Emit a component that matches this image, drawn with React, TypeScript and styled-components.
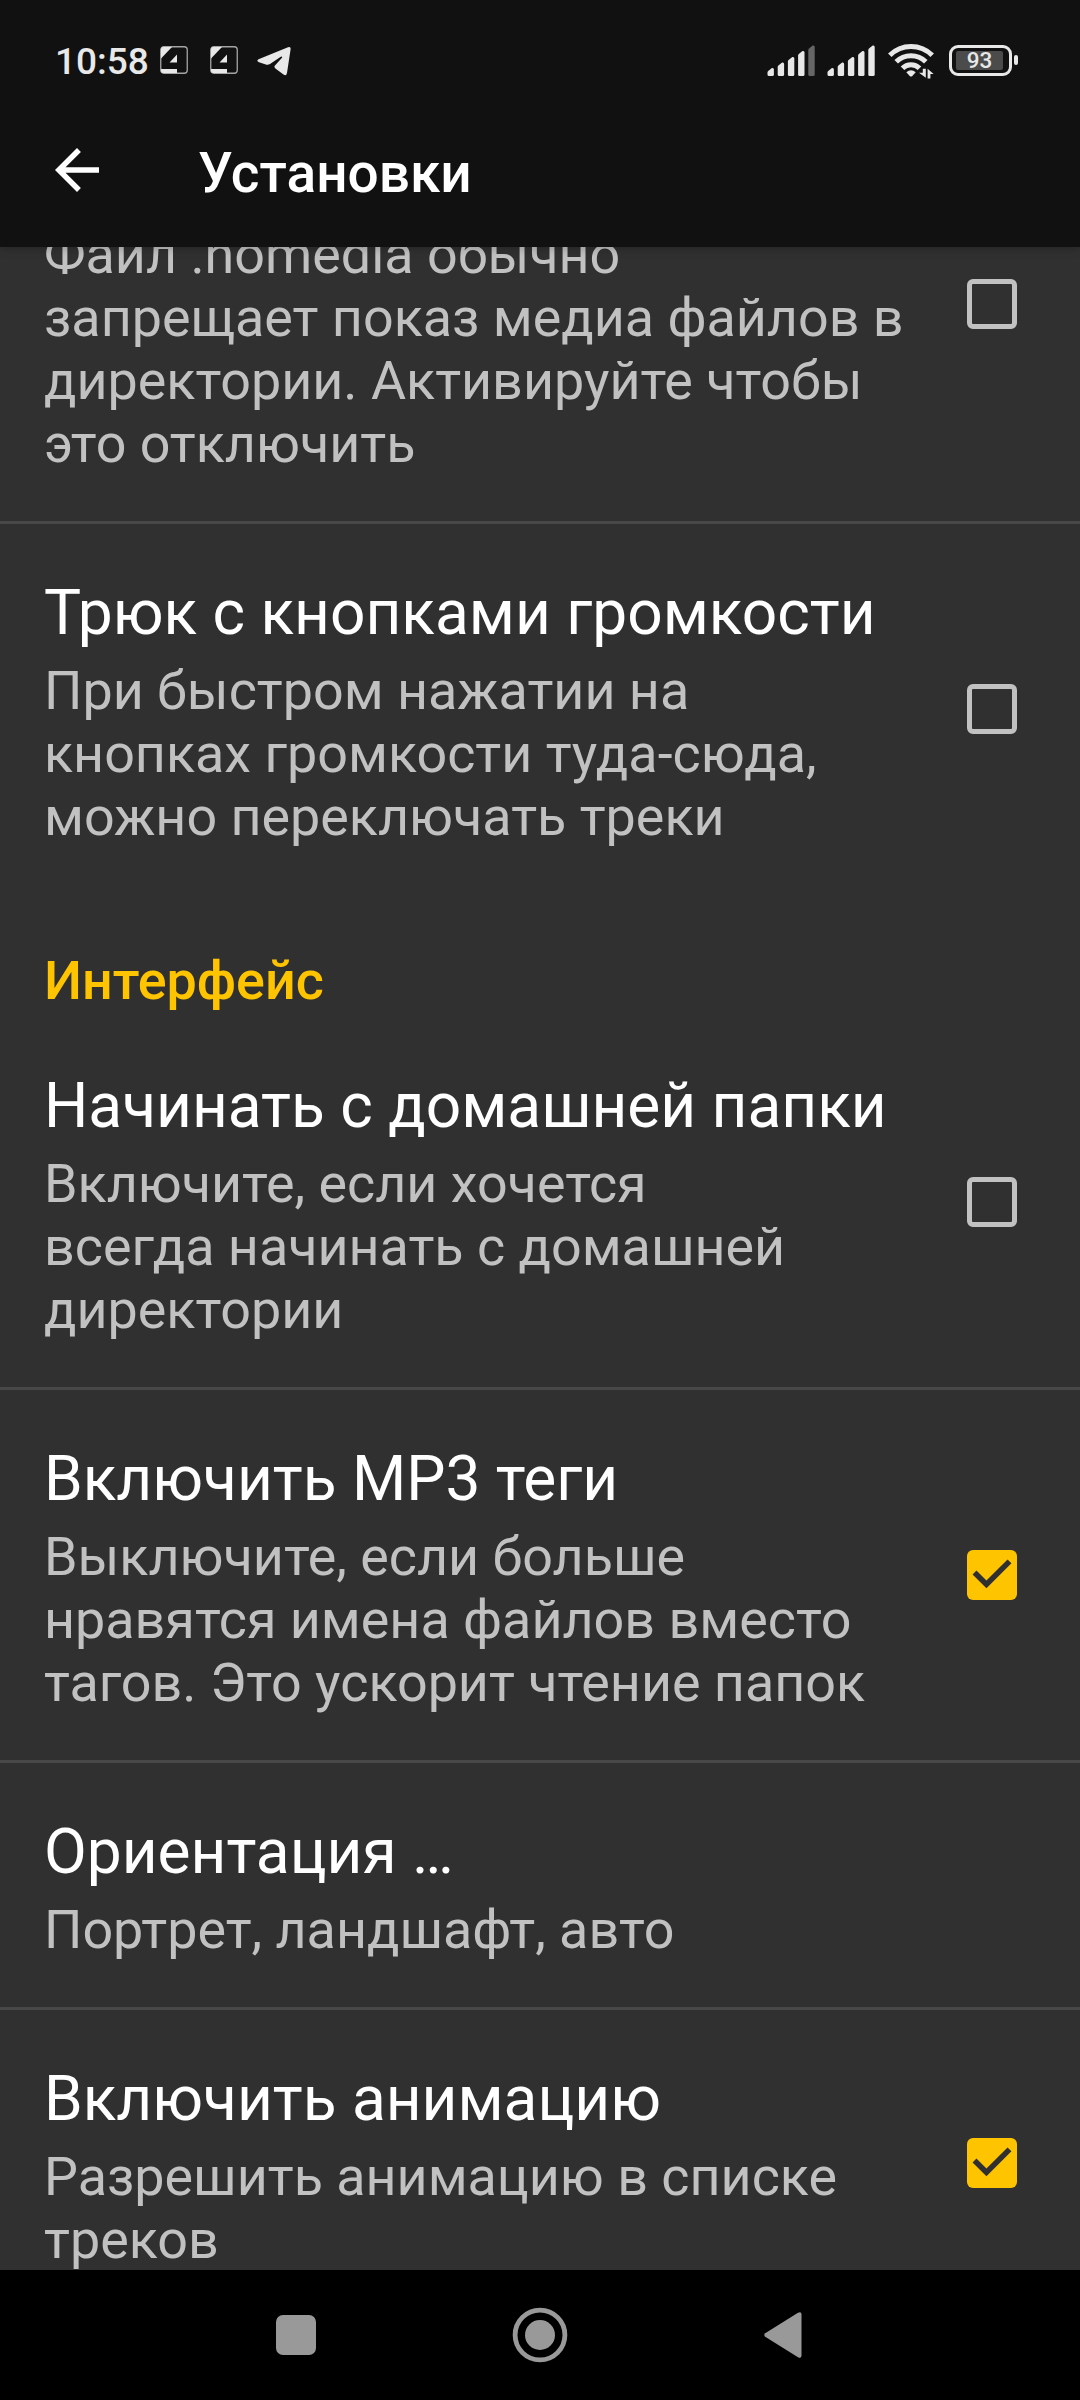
import React from "react";
import styled, { createGlobalStyle, css } from "styled-components";

const GlobalStyle = createGlobalStyle`
  * { box-sizing: border-box; }
  html, body { margin: 0; padding: 0; background: #303030; }
  body { font-family: Roboto, "Noto Sans", sans-serif; }
`;

const Screen = styled.div`
  display: flex;
  flex-direction: column;
  width: 1080px;
  height: 2400px;
  overflow: hidden;
  background: #303030;
`;

const Header = styled.header`
  flex: none;
  height: 247px;
  background: #111111;
  position: relative;
  z-index: 1;
  box-shadow: 0 2px 8px rgba(0, 0, 0, 0.22);
`;

const StatusBar = styled.div`
  display: flex;
  align-items: flex-start;
  justify-content: space-between;
  height: 90px;
  padding: 40px 62px 0 55px;
  color: #e8e8e8;
`;

const StatusGroup = styled.div<{ $drop?: number }>`
  display: flex;
  align-items: flex-start;
  height: 42px;
  padding-top: ${(p) => p.$drop ?? 0}px;
`;

const Clock = styled.span`
  width: 105px;
  font-size: 37px;
  font-weight: 500;
  line-height: 43px;
  white-space: nowrap;
`;

const StatusIcon = styled.svg<{ $gap?: number }>`
  flex: none;
  display: block;
  margin-left: ${(p) => p.$gap ?? 0}px;
`;

const Battery = styled.div`
  display: flex;
  align-items: center;
  height: 40px;
  margin-left: 15px;
`;

const BatteryShell = styled.div`
  width: 63px;
  height: 31px;
  padding: 3px 4px;
  border: 3px solid #e8e8e8;
  border-radius: 9px;
`;

const BatteryCharge = styled.div`
  display: flex;
  align-items: center;
  justify-content: center;
  width: 47px;
  height: 19px;
  border-radius: 2px;
  background: #4b4b4b;
  font-size: 22.5px;
  font-weight: 500;
  line-height: 19px;
`;

const BatteryTip = styled.div`
  width: 4px;
  height: 10px;
  margin-left: 2px;
  border-radius: 2px;
  background: #e8e8e8;
`;

const Toolbar = styled.div`
  display: flex;
  align-items: center;
  height: 160px;
  padding: 0 0 0 44px;
`;

const BackButton = styled.button`
  display: flex;
  width: 66px;
  height: 66px;
  padding: 0;
  border: 0;
  background: none;
  color: #fff;
`;

const ToolbarTitle = styled.h1`
  margin: 7px 0 0 88px;
  color: #fff;
  font-size: 55px;
  font-weight: 500;
  line-height: 65px;
`;

const List = styled.main`
  flex: 1;
  min-height: 0;
  overflow: hidden;
`;

const Row = styled.section<{ $divided?: boolean; $scrolled?: boolean }>`
  display: flex;
  align-items: center;
  padding: 51px 63px 46px 44px;
  ${(p) => p.$divided && css`border-top: 3px solid #484848;`}
  ${(p) =>
    p.$scrolled &&
    css`
      height: 434px;
      margin-top: -160px;
      padding-top: 136px;
    `}
`;

const RowText = styled.div`
  flex: 1;
  display: flex;
  flex-direction: column;
  gap: 9px;
`;

const RowTitle = styled.h2`
  margin: 0;
  color: #fff;
  font-size: 62.2px;
  font-weight: 400;
  line-height: 75px;
  white-space: nowrap;
`;

const Summary = styled.p`
  margin: 0;
  color: #c1c1c1;
  font-size: 53.85px;
  line-height: 63px;
  white-space: pre;
`;

const SectionTitle = styled.h3`
  margin: 0;
  padding: 55px 44px 5px;
  color: #ffc400;
  font-size: 53.9px;
  font-weight: 500;
  line-height: 63px;
`;

const Box = styled.span<{ $checked?: boolean; $raise: number }>`
  flex: none;
  display: flex;
  width: 50px;
  height: 50px;
  margin-left: -60px;
  margin-bottom: ${(p) => p.$raise}px;
  border-radius: 6px;
  ${(p) =>
    p.$checked
      ? css`background: #ffc400;`
      : css`border: 5.5px solid #c1c1c1;`}
`;

const NavBar = styled.nav`
  flex: none;
  display: flex;
  align-items: center;
  justify-content: space-between;
  height: 130px;
  padding: 0 278px 0 276px;
  background: #000;
`;

function Checkbox({ checked, raise = 6 }: { checked?: boolean; raise?: number }) {
  return (
    <Box $checked={checked} $raise={raise} role="checkbox" aria-checked={!!checked}>
      {checked && (
        <svg width="50" height="50" viewBox="3 3.2 18 18">
          <path d="M10 17l-5-5 1.41-1.41L10 14.17l7.59-7.59L19 8l-9 9z" fill="#303030" />
        </svg>
      )}
    </Box>
  );
}

function AppBadge({ gap }: { gap?: number }) {
  return (
    <StatusIcon $gap={gap} width="28" height="28" viewBox="0 0 28 28">
      <rect x="0.75" y="0.75" width="26.5" height="26.5" rx="3" fill="none" stroke="#a5a5a5" strokeWidth="1.3" />
      <path d="M1 3Q1 1 3 1H12L1 12.5Z" fill="currentColor" />
      <path d="M1 23H17V27H3Q1 27 1 25Z" fill="currentColor" />
      <path d="M17 8.5V16.5H9.5Z" fill="currentColor" />
    </StatusIcon>
  );
}

function Signal({ dimLast, gap }: { dimLast?: boolean; gap?: number }) {
  const tops = [22.5, 17, 11.5, 5.5, 0];
  return (
    <StatusIcon $gap={gap} width="48" height="31" viewBox="0 0 48 31">
      {tops.map((t, i) => {
        const x = 0.5 + i * 10.2;
        const w = 6.4;
        return (
          <path
            key={t}
            d={`M${x} ${t + 5}Q${x} ${t + 4} ${x + 1} ${t + 3.2}L${x + w - 2} ${t + 0.5}Q${x + w} ${t} ${x + w} ${t + 2}V29.5Q${x + w} 31 ${x + w - 1.5} 31H${x + 1.5}Q${x} 31 ${x} 29.5Z`}
            fill={dimLast && i === 4 ? "#666" : "currentColor"}
          />
        );
      })}
    </StatusIcon>
  );
}

type Item = { title: string; summary: string; checked?: boolean; divided?: boolean };

function SettingRow({ title, summary, checked, divided }: Item) {
  return (
    <Row $divided={divided}>
      <RowText>
        <RowTitle>{title}</RowTitle>
        <Summary>{summary}</Summary>
      </RowText>
      {checked !== undefined && <Checkbox checked={checked} />}
    </Row>
  );
}

const interfaceItems: Item[] = [
  {
    title: "Начинать с домашней папки",
    summary: "Включите, если хочется\nвсегда начинать с домашней\nдиректории",
    checked: false,
  },
  {
    title: "Включить MP3 теги",
    summary: "Выключите, если больше\nнравятся имена файлов вместо\nтагов. Это ускорит чтение папок",
    checked: true,
    divided: true,
  },
  { title: "Ориентация …", summary: "Портрет, ландшафт, авто", divided: true },
  {
    title: "Включить анимацию",
    summary: "Разрешить анимацию в списке\nтреков",
    checked: true,
    divided: true,
  },
];

export default function App() {
  return (
    <>
      <GlobalStyle />
      <Screen>
        <Header>
          <StatusBar>
            <StatusGroup>
              <Clock>10:58</Clock>
              <StatusGroup $drop={6}>
                <AppBadge />
                <AppBadge gap={22} />
                <StatusIcon $gap={19} width="34" height="30" viewBox="0 0 34 30">
                  <path
                    d="M1.5 13.2L31 1.2Q34 0.2 33.6 3.2L30 27Q29.3 30.5 26.5 28.6L18.4 22.4Q16.5 21 18.2 19.2L25 11.8Q25.8 10 23.8 10.8L13 18Q11 19.2 8.8 18.4L2 16.2Q-1 15 1.5 13.2Z"
                    fill="currentColor"
                  />
                </StatusIcon>
              </StatusGroup>
            </StatusGroup>
            <StatusGroup>
              <StatusGroup $drop={5}>
                <Signal dimLast />
                <Signal gap={12} />
              </StatusGroup>
              <StatusGroup $drop={3}>
                <StatusIcon $gap={13} width="46" height="36" viewBox="0 0 46 36">
                  <g fill="none" stroke="currentColor" strokeWidth="5">
                    <path d="M1.8 12.2A30 30 0 0 1 44.2 12.2" />
                    <path d="M8.2 18.8A21 21 0 0 1 37.8 18.8" />
                    <path d="M14.5 25.2A12 12 0 0 1 31.5 25.2" />
                  </g>
                  <path d="M18.3 29.2Q23 25.4 27.7 29.2L24.3 33Q23 34.2 21.7 33Z" fill="currentColor" />
                  <path d="M34.8 25.8H37.8V34.8L31 29.8H34.8ZM39.6 25.8L45.6 31H42.4V35.4H39.6Z" fill="currentColor" />
                </StatusIcon>
              </StatusGroup>
              <Battery>
                <BatteryShell>
                  <BatteryCharge>93</BatteryCharge>
                </BatteryShell>
                <BatteryTip />
              </Battery>
            </StatusGroup>
          </StatusBar>
          <Toolbar>
            <BackButton aria-label="Назад">
              <svg width="66" height="66" viewBox="0 0 24 24" fill="currentColor">
                <path d="M20 11H7.83l5.59-5.59L12 4l-8 8 8 8 1.41-1.41L7.83 13H20v-2z" />
              </svg>
            </BackButton>
            <ToolbarTitle>Установки</ToolbarTitle>
          </Toolbar>
        </Header>
        <List>
          <Row $scrolled>
            <RowText>
              <Summary>
                {"Файл .nomedia обычно\nзапрещает показ медиа файлов в\nдиректории. Активируйте чтобы\nэто отключить"}
              </Summary>
            </RowText>
            <Checkbox raise={90} />
          </Row>
          <SettingRow
            divided
            checked={false}
            title="Трюк с кнопками громкости"
            summary={"При быстром нажатии на\nкнопках громкости туда-сюда,\nможно переключать треки"}
          />
          <SectionTitle>Интерфейс</SectionTitle>
          {interfaceItems.map((item) => (
            <SettingRow key={item.title} {...item} />
          ))}
        </List>
        <NavBar>
          <svg width="40" height="40" viewBox="0 0 40 40">
            <rect width="40" height="40" rx="7" fill="#999" />
          </svg>
          <svg width="56" height="56" viewBox="0 0 56 56">
            <circle cx="28" cy="28" r="24.9" fill="none" stroke="#999" strokeWidth="4.8" />
            <circle cx="28" cy="28" r="15" fill="#999" />
          </svg>
          <svg width="38" height="46" viewBox="0 0 38 46">
            <path d="M1.2 21.2L34 0.8Q37.5 -0.8 37.5 2.5V43.5Q37.5 46.8 34 45.2L1.2 24.8Q-0.6 23 1.2 21.2Z" fill="#999" />
          </svg>
        </NavBar>
      </Screen>
    </>
  );
}
